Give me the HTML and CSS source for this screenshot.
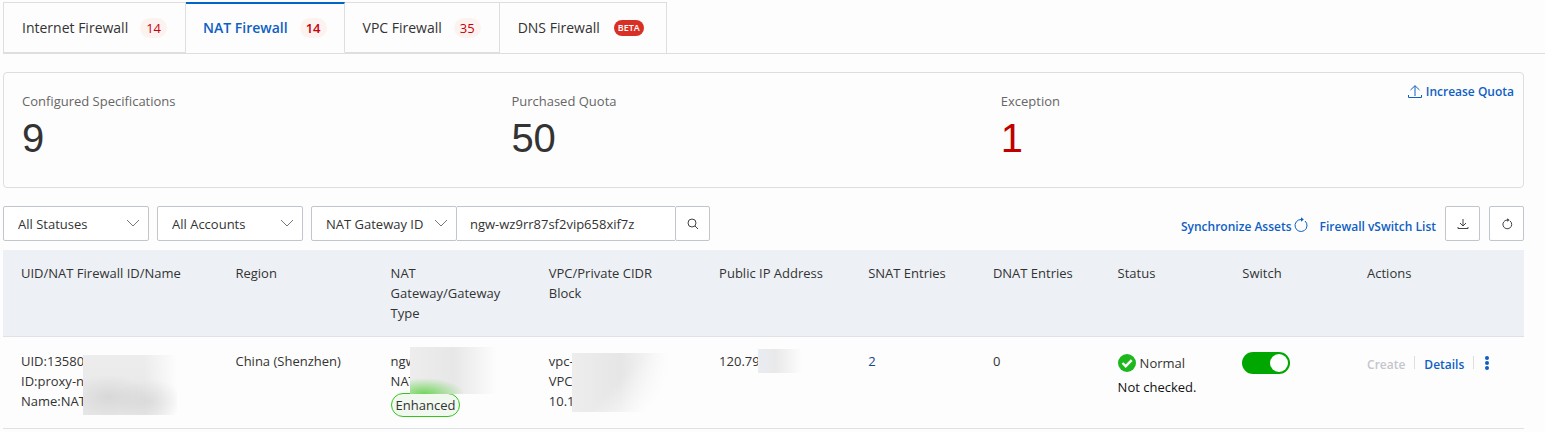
FILE: index.html
```html
<!DOCTYPE html>
<html lang="en">
<head>
    <meta charset="UTF-8">
    <title>NAT Firewall</title>
    <link rel="stylesheet" href="styles.css">
</head>
<body>
<nav class="tabs">
    <a class="tab" href="#internet">Internet Firewall <span class="count">14</span></a>
    <a class="tab active" href="#nat">NAT Firewall <span class="count">14</span></a>
    <a class="tab" href="#vpc">VPC Firewall <span class="count">35</span></a>
    <a class="tab" href="#dns">DNS Firewall <span class="beta">BETA</span></a>
</nav>
<main class="content">
    <section class="summary">
        <div class="stat">
            <div class="stat-label">Configured Specifications</div>
            <div class="stat-value">9</div>
        </div>
        <div class="stat">
            <div class="stat-label">Purchased Quota</div>
            <div class="stat-value">50</div>
        </div>
        <div class="stat">
            <div class="stat-label">Exception</div>
            <div class="stat-value error">1</div>
        </div>
        <a class="link increase" href="#quota">
            <svg width="14" height="14" viewBox="0 0 14 14" fill="none" stroke="currentColor"><path d="M7 11V.8M2.5 5L7 .7 11.5 5M.5 10v2.5h13V10"/></svg>
            Increase Quota
        </a>
    </section>

    <div class="toolbar">
        <div class="select-box">
            <select aria-label="Status"><option>All Statuses</option></select>
            <svg class="chevron" width="14" height="8" viewBox="0 0 14 8"><path d="M1 1l6 6 6-6"/></svg>
        </div>
        <div class="select-box">
            <select aria-label="Account"><option>All Accounts</option></select>
            <svg class="chevron" width="14" height="8" viewBox="0 0 14 8"><path d="M1 1l6 6 6-6"/></svg>
        </div>
        <div class="search">
            <div class="select-box">
                <select aria-label="Search by"><option>NAT Gateway ID</option></select>
                <svg class="chevron" width="14" height="8" viewBox="0 0 14 8"><path d="M1 1l6 6 6-6"/></svg>
            </div>
            <input class="search-input" type="text" aria-label="Search value" value="ngw-wz9rr87sf2vip658xif7z">
            <button class="search-btn" type="button" aria-label="Search">
                <svg width="12" height="12" viewBox="0 0 12 12" fill="none" stroke="currentColor"><circle cx="5" cy="5" r="4"/><path d="M8 8l3 3"/></svg>
            </button>
        </div>
        <div class="tools">
            <a class="link sync" href="#sync">Synchronize Assets
                <svg width="14" height="16" viewBox="0 0 14 16" fill="none" stroke="currentColor"><path d="M11 4A6 6 0 1 1 7 2.5h1.5"/><path d="M7 .2l2.8 2.3L7 4.8z" fill="currentColor" stroke="none"/></svg>
            </a>
            <a class="link vswitch" href="#vswitch">Firewall vSwitch List</a>
            <button class="icon-btn" type="button" aria-label="Download">
                <svg width="12" height="12" viewBox="0 0 12 12" fill="none" stroke="currentColor"><path d="M6 1v7M3 5l3 3 3-3M1 9v1.5h10V9"/></svg>
            </button>
            <button class="icon-btn" type="button" aria-label="Refresh">
                <svg width="12" height="12" viewBox="0 0 12 12" fill="none" stroke="currentColor"><path d="M9 2.9A4.4 4.4 0 1 1 6 2h1.5"/><path d="M6.2.2l2.4 1.8-2.4 1.8z" fill="currentColor" stroke="none"/></svg>
            </button>
        </div>
    </div>

    <table class="list">
        <colgroup>
            <col class="c-uid">
            <col class="c-region">
            <col class="c-nat">
            <col class="c-vpc">
            <col class="c-ip">
            <col class="c-num">
            <col class="c-num">
            <col class="c-num">
            <col class="c-num">
            <col class="c-actions">
        </colgroup>
        <thead>
        <tr>
            <th>UID/NAT Firewall ID/Name</th>
            <th>Region</th>
            <th>NAT Gateway/Gateway Type</th>
            <th>VPC/Private CIDR Block</th>
            <th>Public IP Address</th>
            <th>SNAT Entries</th>
            <th>DNAT Entries</th>
            <th>Status</th>
            <th>Switch</th>
            <th>Actions</th>
        </tr>
        </thead>
        <tbody>
        <tr>
            <td><div class="cell">UID:13580<br>ID:proxy-n<br>Name:NAT<span class="mask mask-uid"></span></div></td>
            <td>China (Shenzhen)</td>
            <td><div class="cell">ngw<br>NAT<br><span class="tag">Enhanced</span><span class="mask mask-nat"></span></div></td>
            <td><div class="cell">vpc-<br>VPC<br>10.1<span class="mask mask-vpc"></span></div></td>
            <td><div class="cell">120.79<span class="mask mask-ip"></span></div></td>
            <td><a class="number" href="#snat">2</a></td>
            <td>0</td>
            <td>
                <div class="status">
                    <svg width="18" height="18" viewBox="0 0 18 18"><circle cx="9" cy="9" r="9" fill="#1eb81e"/><path d="M4.5 9l3.2 3.2 6-6" fill="none" stroke="#fff" stroke-width="2.4"/></svg>
                    Normal
                </div>
                <div class="status-note">Not checked.</div>
            </td>
            <td><input class="switch" type="checkbox" role="switch" aria-label="Firewall switch" checked></td>
            <td>
                <div class="actions">
                    <button class="action" type="button" disabled>Create</button>
                    <a class="action link" href="#details">Details</a>
                    <button class="more" type="button" aria-label="More">
                        <svg width="4" height="14" viewBox="0 0 4 14" fill="currentColor"><circle cx="2" cy="2" r="2"/><circle cx="2" cy="7" r="2"/><circle cx="2" cy="12" r="2"/></svg>
                    </button>
                </div>
            </td>
        </tr>
        </tbody>
    </table>
</main>
</body>
</html>
```
FILE: styles.css
```css
* {
    box-sizing: border-box;
}

body {
    margin: 0;
    padding: 2px 0 0 3px;
    background: #fdfdfd;
    color: #333;
    font: 13px/20px "Open Sans", "Noto Sans", sans-serif;
}

a {
    text-decoration: none;
}

svg {
    flex-shrink: 0;
}

button,
input,
select {
    margin: 0;
    font: inherit;
    color: inherit;
}

button {
    cursor: pointer;
}

/* tabs */
.tabs {
    display: flex;
    border-bottom: 1px solid #dedede;
}

.tab {
    display: flex;
    align-items: center;
    height: 51px;
    padding: 0 18px;
    border: 1px solid #dedede;
    border-left: 0;
    color: #333;
    font-size: 14px;
}

.tab:first-child {
    border-left: 1px solid #dedede;
}

.tab.active {
    padding: 0 17px;
    border-top: 2px solid #0064c8;
    border-bottom-color: #fdfdfd;
    color: #0f5fc4;
    font-weight: 600;
}

.tab:last-child {
    border-bottom: 0;
    padding-right: 22px;
}

.count {
    margin-left: 12px;
    padding: 0 6px;
    border-radius: 10px;
    background: #fcf3f1;
    color: #c8000a;
    font-size: 13px;
}

.beta {
    margin-left: 14px;
    padding: 0 4px;
    border-radius: 8px;
    background: #d93026;
    color: #fff;
    font-size: 9px;
    font-weight: 600;
    line-height: 16px;
}

.content {
    padding: 18px 21px 0 0;
}

/* summary */
.summary {
    position: relative;
    display: flex;
    padding: 18px 18px 26px;
    border: 1px solid #dedede;
    border-radius: 4px;
}

.stat {
    width: 33%;
}

.stat-label {
    color: #666;
}

.stat-value {
    margin-top: 4px;
    font: 40px/46px "Liberation Sans", Arial, sans-serif;
}

.stat-value.error {
    color: #c00000;
}

.link {
    color: #0f5fc4;
    font-size: 12px;
    font-weight: 600;
}

.increase {
    position: absolute;
    top: 9px;
    right: 9px;
    display: flex;
    align-items: center;
    gap: 4px;
}

/* toolbar */
.toolbar {
    display: flex;
    gap: 8px;
    margin: 18px 0 9px;
}

.select-box {
    position: relative;
    width: 146px;
}

.select-box select {
    width: 100%;
    height: 35px;
    padding: 0 28px 0 14px;
    border: 1px solid #c0c6cc;
    border-radius: 2px;
    background: #fff;
    appearance: none;
}

.chevron {
    position: absolute;
    top: 13px;
    right: 9px;
    fill: none;
    stroke: #777;
    pointer-events: none;
}

.search {
    display: flex;
}

.search-input {
    width: 218px;
    height: 35px;
    padding: 0 13px;
    border: solid #c0c6cc;
    border-width: 1px 0;
    background: #fff;
}

.search-btn,
.icon-btn {
    display: flex;
    align-items: center;
    justify-content: center;
    width: 35px;
    height: 35px;
    padding: 0;
    border: 1px solid #c0c6cc;
    border-radius: 2px;
    background: #fff;
    color: #444;
}

.tools {
    display: flex;
    align-items: center;
    margin-left: auto;
}

.tools .link {
    padding-top: 6px;
}

.sync {
    display: flex;
    align-items: center;
    gap: 2px;
    margin-right: 12px;
}

.sync svg {
    margin-bottom: 4px;
}

.vswitch {
    margin-right: 9px;
}

.icon-btn + .icon-btn {
    margin-left: 9px;
}

/* table */
.list {
    width: 100%;
    border-collapse: separate;
    border-spacing: 0;
    table-layout: fixed;
}

.c-uid { width: 14.1%; }
.c-region { width: 10.2%; }
.c-nat { width: 10.4%; }
.c-vpc { width: 11.2%; }
.c-ip { width: 9.8%; }
.c-num { width: 8.2%; }
.c-actions { width: 11.5%; }

th,
td {
    border-bottom: 1px solid #dee1e6;
    text-align: left;
    vertical-align: top;
    font-weight: 400;
}

th {
    padding: 13px 18px;
    background: #edf1f6;
}

td {
    padding: 14px 0 11px 18px;
}

.cell {
    position: relative;
}

.tag {
    display: inline-block;
    margin-top: 2px;
    padding: 0 4px;
    border: 1px solid #35c41c;
    border-radius: 12px;
    background: #f1f8ef;
    line-height: 22px;
    vertical-align: top;
}

/* hides the private part of a value */
.mask {
    position: absolute;
    background: linear-gradient(90deg, #e9ecf2, #e9e9e9 40%, #fdfdfd);
}

.mask-uid {
    top: 4px;
    left: 62px;
    width: 94px;
    height: 60px;
    background:
        radial-gradient(ellipse 40px 22px at 26px 42px, rgba(205, 205, 205, .6), transparent),
        radial-gradient(ellipse 34px 22px at 66px 46px, rgba(205, 205, 205, .5), transparent),
        linear-gradient(90deg, transparent 65%, #fdfdfd),
        linear-gradient(#ededed, #e6e6e6);
}

.mask-nat {
    top: -4px;
    left: 19px;
    width: 87px;
    height: 47px;
    background:
        radial-gradient(ellipse 40px 16px at 14px 47px, rgba(100, 210, 75, .9), transparent),
        linear-gradient(90deg, #ededed, #e7e7e7 50%, #fdfdfd);
}

.mask-vpc {
    top: 2px;
    left: 23px;
    width: 108px;
    height: 59px;
    background:
        linear-gradient(135deg, transparent 45%, #fdfdfd 80%),
        linear-gradient(90deg, #ededed, #e6e6e6 45%, #fdfdfd 90%);
}

.mask-ip {
    top: -2px;
    left: 39px;
    width: 44px;
    height: 24px;
}

.number {
    color: #17468a;
}

.status {
    display: flex;
    align-items: center;
    gap: 4px;
    padding-top: 2px;
}

.status-note {
    margin-top: 4px;
    color: #111;
}

.switch {
    display: flex;
    align-items: center;
    justify-content: flex-end;
    width: 48px;
    height: 22px;
    margin-top: 1px;
    padding: 2px;
    border-radius: 11px;
    background: #00a700;
    appearance: none;
    cursor: pointer;
}

.switch::before {
    content: "";
    width: 18px;
    height: 18px;
    border-radius: 50%;
    background: #fff;
}

.switch:not(:checked) {
    justify-content: flex-start;
    background: #bbb;
}

.actions {
    display: flex;
    align-items: flex-start;
}

.action {
    padding: 4px 0 0;
    border: 0;
    background: none;
    font-size: 12px;
    font-weight: 600;
}

.action:disabled {
    color: #c4c6cc;
    cursor: default;
}

.action::after {
    content: "";
    display: inline-block;
    height: 13px;
    margin: 0 9px;
    border-left: 1px solid #dedede;
}

.more {
    display: flex;
    padding: 5px 2px;
    border: 0;
    background: none;
    color: #0f5fc4;
}
```
